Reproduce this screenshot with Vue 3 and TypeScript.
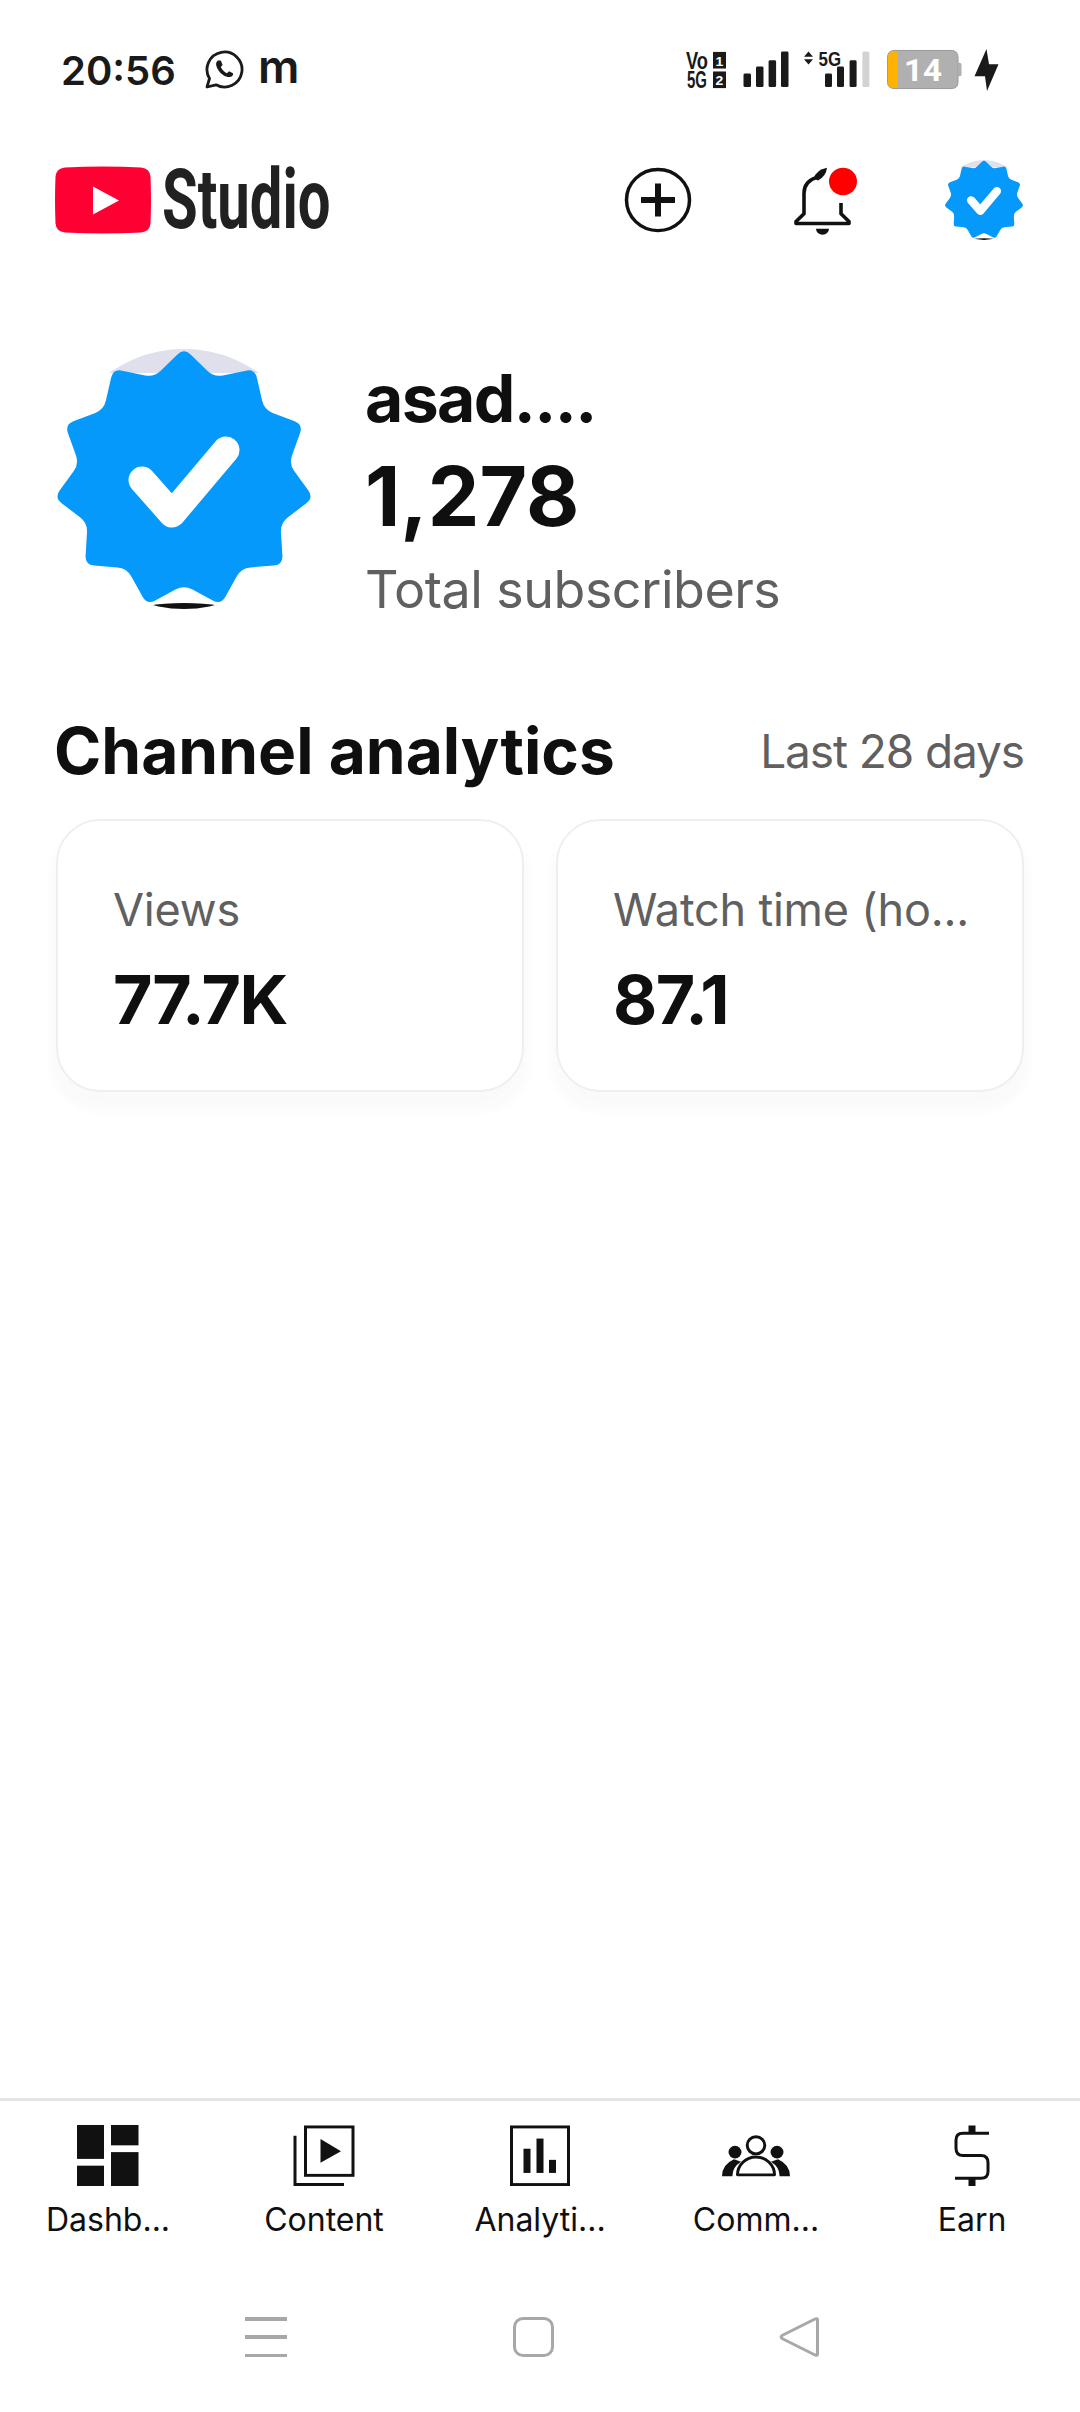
<template>
  <div class="screen">
    <svg width="0" height="0" class="defs">
      <defs>
        <clipPath id="avatar-clip"><circle cx="130" cy="130" r="130" /></clipPath>
        <symbol id="avatar" viewBox="0 0 260 260" preserveAspectRatio="none">
          <g clip-path="url(#avatar-clip)">
            <rect width="260" height="24" fill="#dfe0ec" />
            <ellipse cx="130" cy="263" rx="50" ry="9" fill="#111" />
            <path :d="badgePath" fill="#0599fb" />
            <path d="M88 131 L118 165 L172 101" fill="none" stroke="#fff" stroke-width="27" stroke-linecap="round" stroke-linejoin="round" />
          </g>
        </symbol>
      </defs>
    </svg>

    <div class="status-bar">
      <div class="status-left">
        <span class="time">20:56</span>
        <svg class="wa" viewBox="0 0 40 42" width="40" height="42">
          <path d="M3 38 L5.5 29.5 A17.5 17.5 0 1 1 12 35.8 Z" fill="none" stroke="#1a1a1a" stroke-width="2.8" stroke-linejoin="round" />
          <path d="M14 11.5 C11.5 13 11.5 16.5 14 20.5 C17 25.5 22 28.5 26 28 C28.5 27.6 29.5 25.5 29 24.2 L25 22.2 L23 24.2 C20.5 23.2 18 20.8 16.8 18 L18.6 16 L16.8 11.6 Z" fill="#1a1a1a" />
        </svg>
        <span class="m-glyph">m</span>
      </div>
      <svg class="status-right" viewBox="686 50 313 45" width="313" height="44" preserveAspectRatio="none">
        <text x="686" y="71" class="net" textLength="22" lengthAdjust="spacingAndGlyphs">Vo</text>
        <text x="687" y="91" class="net" textLength="20" lengthAdjust="spacingAndGlyphs">5G</text>
        <rect x="713" y="54" width="13" height="17" fill="#1a1a1a" />
        <rect x="713" y="74" width="13" height="17" fill="#1a1a1a" />
        <text x="719.5" y="68" class="sim">1</text>
        <text x="719.5" y="88" class="sim">2</text>
        <rect v-for="b in bars1" :key="b.x" :x="b.x" :y="b.y" width="7.5" :height="90 - b.y" rx="1.5" fill="#1a1a1a" />
        <path d="M808.5 53.5 L813 59 H804 Z M808.5 67 L813 61.5 H804 Z" fill="#1a1a1a" />
        <text x="818.5" y="68" class="net-small" textLength="22.5" lengthAdjust="spacingAndGlyphs">5G</text>
        <rect v-for="b in bars2" :key="b.x" :x="b.x" :y="b.y" width="7" :height="90 - b.y" rx="1.5" :fill="b.c" />
        <path d="M895 52.5 H951 Q958 52.5 958 59.5 V85 Q958 91.5 951 91.5 H895 Q887.5 91.5 887.5 85 V59.5 Q887.5 52.5 895 52.5 Z" fill="#b0b0b0" stroke="#9a9a9a" stroke-width="1" />
        <path d="M895 53 H897.6 V91 H895 Q888 91 888 85 V59.5 Q888 53 895 53 Z" fill="#ffb300" />
        <path d="M958 65 h1.5 q2 0 2 2 v10 q0 2 -2 2 h-1.5 Z" fill="#b0b0b0" />
        <text x="923" y="84" class="batt">14</text>
        <path d="M986.5 51 L974.5 79 H985 L987 94 L998.5 66.5 H989 Z" fill="#1a1a1a" />
      </svg>
    </div>

    <header class="top-bar">
      <div class="brand">
        <svg class="yt" viewBox="0 0 96 70" width="96" height="68" preserveAspectRatio="none">
          <path d="M10 1.5 Q48 -0.5 86 1.5 Q95 2.5 95.5 11 Q96.5 35 95.5 59 Q95 67.5 86 68.5 Q48 70.5 10 68.5 Q1 67.5 .5 59 Q-.5 35 .5 11 Q1 2.5 10 1.5 Z" fill="#ff0033" />
          <path d="M38 21 L64 35.5 L38 50 Z" fill="#fff" />
        </svg>
        <span class="studio">Studio</span>
      </div>
      <div class="actions">
        <svg class="act-plus" viewBox="0 0 68 68" width="68" height="66" preserveAspectRatio="none">
          <circle cx="34" cy="34" r="31.5" fill="none" stroke="#111" stroke-width="3.5" />
          <path d="M17 34 H51 M34 17 V51" stroke="#111" stroke-width="6" />
        </svg>
        <div class="bell-wrap">
          <svg viewBox="790 165 70 80" width="70" height="78" preserveAspectRatio="none">
            <path d="M841 208 V219 L849 227 V229 H796 V227 L804 219 V198 Q804 186 816 182" fill="none" stroke="#111" stroke-width="3.6" stroke-linejoin="round" />
            <path d="M814 183 Q816 174 827 172 Q826 181 818 185 Z" fill="#111" />
            <path d="M816 234.5 H829 A6.5 6.2 0 0 1 816 234.5 Z" fill="#111" />
            <circle cx="843" cy="186" r="14" fill="#fe0000" />
          </svg>
        </div>
        <svg class="act-avatar" width="80" height="80"><use href="#avatar" width="80" height="80" /></svg>
      </div>
    </header>

    <section class="profile">
      <svg class="big-avatar" width="260" height="260"><use href="#avatar" width="260" height="260" /></svg>
      <div class="channel">
        <div class="name">asad....</div>
        <div class="subs">1,278</div>
        <div class="subs-label">Total subscribers</div>
      </div>
    </section>

    <div class="section-head">
      <h2>Channel analytics</h2>
      <span>Last 28 days</span>
    </div>

    <div class="cards">
      <div v-for="c in cards" :key="c.label" class="card">
        <div class="card-label">{{ c.label }}</div>
        <div class="card-value">{{ c.value }}</div>
      </div>
    </div>

    <nav class="tabs">
      <div class="tab">
        <svg viewBox="0 0 62 63" width="62" height="61" preserveAspectRatio="none">
          <g fill="#111">
            <rect x="0" y="0" width="27" height="35" />
            <rect x="0" y="42" width="27" height="21" />
            <rect x="34" y="0" width="27.5" height="21" />
            <rect x="34" y="28" width="27.5" height="35" />
          </g>
        </svg>
        <span>Dashb...</span>
      </div>
      <div class="tab">
        <svg viewBox="293 126 62 63" width="62" height="61" preserveAspectRatio="none">
          <rect x="305.5" y="128" width="47.5" height="50" fill="none" stroke="#111" stroke-width="3" />
          <path d="M295 137 V187.5 H344" fill="none" stroke="#111" stroke-width="3" />
          <path d="M320.5 140.5 L341 153 L320.5 165 Z" fill="#111" />
        </svg>
        <span>Content</span>
      </div>
      <div class="tab">
        <svg viewBox="509 126 62 63" width="62" height="61" preserveAspectRatio="none">
          <rect x="511.5" y="128" width="57" height="59.5" fill="none" stroke="#111" stroke-width="3" />
          <rect x="523.5" y="150.5" width="7" height="25" fill="#111" />
          <rect x="536.5" y="140" width="7" height="35.5" fill="#111" />
          <rect x="549" y="162" width="7" height="13.5" fill="#111" />
        </svg>
        <span>Analyti...</span>
      </div>
      <div class="tab">
        <svg viewBox="720 126 72 63" width="72" height="61" preserveAspectRatio="none">
          <circle cx="756" cy="147" r="8.8" fill="none" stroke="#111" stroke-width="3" />
          <path d="M737.5 177.5 A18.5 18.5 0 0 1 774.5 177.5 Z" fill="none" stroke="#111" stroke-width="3" stroke-linejoin="round" />
          <circle cx="735" cy="154" r="6.5" fill="#111" />
          <circle cx="777" cy="154" r="6.5" fill="#111" />
          <path d="M722 179 Q722 167 734 161.5 L741 164 Q732 170 732.5 179 Z M790 179 Q790 167 778 161.5 L771 164 Q780 170 779.5 179 Z" fill="#111" />
        </svg>
        <span>Comm...</span>
      </div>
      <div class="tab">
        <svg viewBox="941 126 62 63" width="62" height="61" preserveAspectRatio="none">
          <path d="M989 134.5 H963 Q956 134.5 956 141.5 V150 Q956 157.5 963 157.5 H981 Q988 157.5 988 165 V174 Q988 181 981 181 H955" fill="none" stroke="#111" stroke-width="3" />
          <path d="M972 126.5 V134 M972 181 V189" stroke="#111" stroke-width="7" />
        </svg>
        <span>Earn</span>
      </div>
    </nav>

    <div class="sys-nav">
      <div class="menu"><i></i><i></i><i></i></div>
      <div class="home"></div>
      <svg viewBox="0 0 42 42" width="42" height="40" preserveAspectRatio="none">
        <path d="M38.5 3 V39 Q38.5 41 36 39.8 L3 22.5 Q1.2 21 3 19.5 L36 2.2 Q38.5 1 38.5 3 Z" fill="none" stroke="#a8a8a8" stroke-width="3" stroke-linejoin="round" />
      </svg>
    </div>
  </div>
</template>

<script setup lang="ts">
import { computed } from 'vue'

const cards = [
  { label: 'Views', value: '77.7K' },
  { label: 'Watch time (ho...', value: '87.1' }
]

const bars1 = [
  { x: 743.5, y: 76 },
  { x: 756, y: 69 },
  { x: 768.6, y: 62.5 },
  { x: 781, y: 53.5 }
]

const bars2 = [
  { x: 825, y: 76, c: '#1a1a1a' },
  { x: 837, y: 69, c: '#1a1a1a' },
  { x: 849.6, y: 62.5, c: '#1a1a1a' },
  { x: 862.4, y: 53.5, c: '#d3d3d3' }
]

// 11 point verified badge, point up and notch at the bottom, corners slightly rounded
const badgePath = computed(() => {
  const pts: [number, number][] = []
  for (let i = 0; i < 22; i++) {
    const a = (i * Math.PI) / 11 - Math.PI / 2
    const r = i % 2 === 0 ? 131 : 106
    pts.push([130 + r * Math.cos(a), 130 + r * Math.sin(a)])
  }
  const t = 0.22
  const lerp = (p: [number, number], q: [number, number], k: number) =>
    `${(p[0] + (q[0] - p[0]) * k).toFixed(1)} ${(p[1] + (q[1] - p[1]) * k).toFixed(1)}`
  let d = ''
  pts.forEach((p, i) => {
    const prev = pts[(i + 21) % 22]
    const next = pts[(i + 1) % 22]
    d += `${i === 0 ? 'M' : ' L'}${lerp(p, prev, t)} Q${p[0].toFixed(1)} ${p[1].toFixed(1)} ${lerp(p, next, t)}`
  })
  return d + ' Z'
})
</script>

<style scoped>
.screen {
  width: 1080px;
  height: 2412px;
  background: #fff;
  display: flex;
  flex-direction: column;
  overflow: hidden;
  color: #0f0f0f;
  font-family: Inter, "Noto Sans", sans-serif;
}

.defs {
  position: absolute;
}

.status-bar {
  height: 100px;
  padding: 40px 81px 0 61px;
  box-sizing: border-box;
  display: flex;
  align-items: center;
  justify-content: space-between;
}

.status-left {
  display: flex;
  align-items: center;
}

.time {
  font-size: 40px;
  font-weight: 600;
  color: #1a1a1a;
  width: 143px;
}

.m-glyph {
  font-size: 46px;
  font-weight: 600;
  line-height: 40px;
  margin-left: 14px;
  margin-top: -8px;
  color: #1a1a1a;
}

.net {
  font-family: "Liberation Sans", sans-serif;
  font-size: 24px;
  font-weight: 700;
  fill: #1a1a1a;
}

.net-small {
  font-family: "Liberation Sans", sans-serif;
  font-size: 21px;
  font-weight: 700;
  fill: #1a1a1a;
}

.sim {
  font-family: "Liberation Sans", sans-serif;
  font-size: 14px;
  font-weight: 700;
  fill: #fff;
  text-anchor: middle;
}

.batt {
  font-family: Roboto, sans-serif;
  font-size: 33px;
  font-weight: 700;
  fill: #fff;
  text-anchor: middle;
}

.top-bar {
  margin-top: 55px;
  height: 90px;
  padding: 0 56px 0 55px;
  display: flex;
  align-items: center;
  justify-content: space-between;
}

.brand {
  display: flex;
  align-items: center;
  width: 400px;
}

.studio {
  font-family: Roboto, sans-serif;
  font-size: 84px;
  font-weight: 700;
  line-height: 90px;
  color: #212121;
  margin-left: 11px;
  display: inline-block;
  transform: scaleX(0.69);
  transform-origin: left center;
}

.actions {
  display: flex;
  align-items: center;
}

.act-plus {
  margin-right: 98px;
}

.bell-wrap {
  height: 78px;
  margin-right: 84px;
}

.act-avatar {
  display: block;
}

.profile {
  margin-top: 104px;
  padding-left: 54px;
  display: flex;
  align-items: flex-start;
  gap: 51px;
}

.big-avatar {
  flex: none;
}

.channel {
  margin-top: 9px;
  display: flex;
  flex-direction: column;
}

.name {
  font-size: 66px;
  font-weight: 700;
  line-height: 80px;
  letter-spacing: -1.6px;
}

.subs {
  font-size: 82px;
  font-weight: 700;
  line-height: 92px;
  margin-top: 13px;
}

.subs-label {
  font-size: 52px;
  color: #606060;
  line-height: 70px;
  margin-top: 12px;
  letter-spacing: -0.5px;
}

.section-head {
  margin-top: 88px;
  padding: 0 56px 0 54px;
  display: flex;
  align-items: center;
  justify-content: space-between;
}

.section-head h2 {
  margin: 0;
  font-size: 64px;
  font-weight: 700;
  line-height: 76px;
}

.section-head span {
  font-size: 46px;
  color: #606060;
  letter-spacing: -1.1px;
}

.cards {
  margin-top: 30px;
  padding: 0 56px;
  display: grid;
  grid-template-columns: 1fr 1fr;
  gap: 32px;
}

.card {
  height: 273px;
  box-sizing: border-box;
  border: 2px solid #efefef;
  border-radius: 44px;
  padding: 59px 20px 0 55px;
  background: #fff;
  box-shadow: 0 14px 8px 6px rgba(0, 0, 0, 0.018);
}

.card-label {
  font-size: 45px;
  line-height: 60px;
  color: #606060;
  white-space: nowrap;
  letter-spacing: -0.2px;
}

.card-value {
  margin-top: 21px;
  font-size: 68px;
  font-weight: 700;
  line-height: 76px;
  letter-spacing: -1.5px;
}

.tabs {
  margin-top: auto;
  height: 204px;
  box-sizing: border-box;
  border-top: 3px solid #e4e4e4;
  padding-top: 24px;
  display: grid;
  grid-template-columns: repeat(5, 1fr);
}

.tab {
  display: flex;
  flex-direction: column;
  align-items: center;
}

.tab span {
  margin-top: 12px;
  font-size: 32px;
  line-height: 44px;
  color: #0f0f0f;
}

.sys-nav {
  height: 110px;
  box-sizing: border-box;
  padding: 15px 259px 0 245px;
  display: flex;
  align-items: flex-start;
  justify-content: space-between;
}

.menu {
  width: 42px;
  height: 40px;
  display: flex;
  flex-direction: column;
  justify-content: space-between;
}

.menu i {
  display: block;
  height: 3.5px;
  background: #a8a8a8;
}

.home {
  width: 41px;
  height: 40px;
  box-sizing: border-box;
  border: 3px solid #a8a8a8;
  border-radius: 10px;
}
</style>

<style>
html,
body {
  margin: 0;
  background: #fff;
}
</style>
